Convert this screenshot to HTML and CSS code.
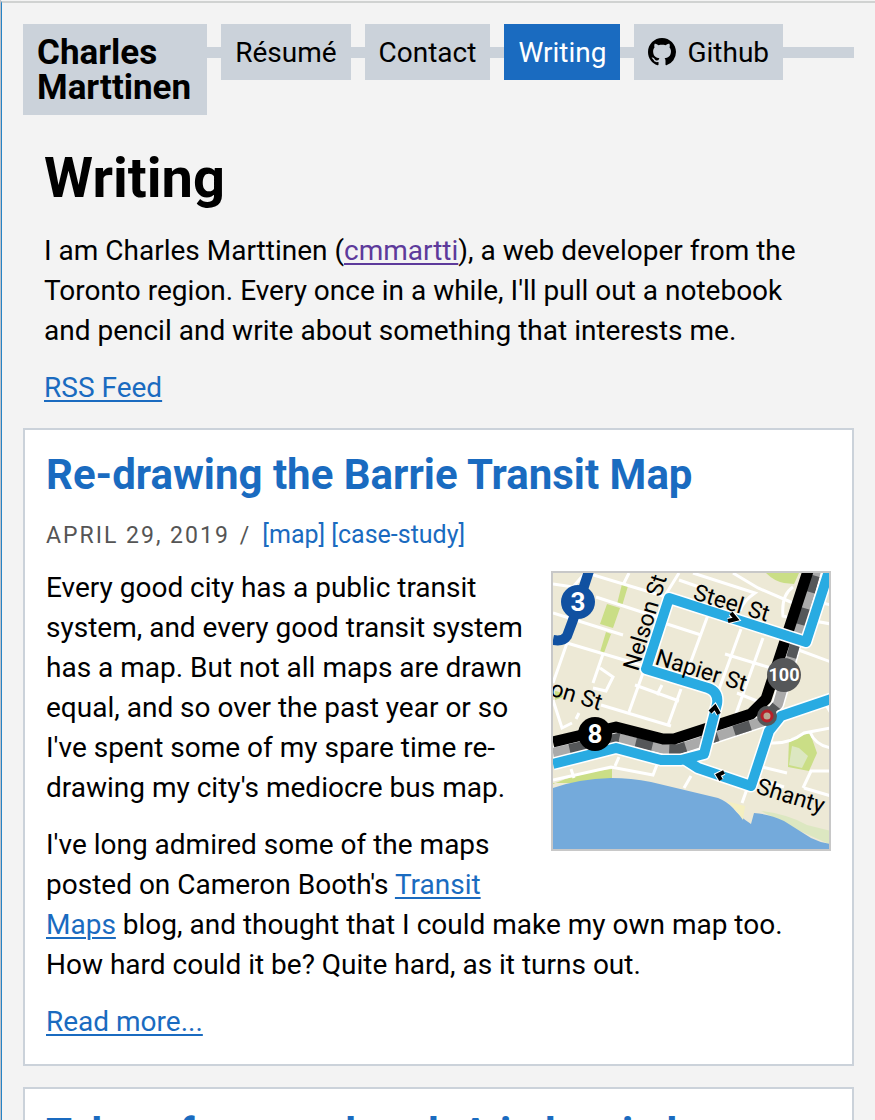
FILE: index.html
```html
<!DOCTYPE html>
<html lang="en">
<head>
<meta charset="utf-8">
<meta name="viewport" content="width=device-width, initial-scale=1">
<title>Writing – Charles Marttinen</title>
<link rel="stylesheet" href="styles.css">
</head>
<body>
<header class="site-header">
  <a class="brand" href="#">Charles<br>Marttinen</a>
  <nav class="site-nav" aria-label="Main">
    <a class="nav-link" href="#">Résumé</a>
    <a class="nav-link" href="#">Contact</a>
    <a class="nav-link current" href="#" aria-current="page">Writing</a>
    <a class="nav-link" href="#"><svg class="nav-icon" viewBox="0 0 16 16" aria-hidden="true"><path d="M8 0C3.58 0 0 3.58 0 8c0 3.54 2.29 6.53 5.47 7.59.4.07.55-.17.55-.38 0-.19-.01-.82-.01-1.49-2.01.37-2.53-.49-2.69-.94-.09-.23-.48-.94-.82-1.13-.28-.15-.68-.52-.01-.53.63-.01 1.08.58 1.23.82.72 1.21 1.87.87 2.33.66.07-.52.28-.87.51-1.07-1.78-.2-3.64-.89-3.64-3.95 0-.87.31-1.59.82-2.15-.08-.2-.36-1.02.08-2.12 0 0 .67-.21 2.2.82.64-.18 1.32-.27 2-.27s1.36.09 2 .27c1.53-1.04 2.2-.82 2.2-.82.44 1.1.16 1.92.08 2.12.51.56.82 1.27.82 2.15 0 3.07-1.87 3.75-3.65 3.95.29.25.54.73.54 1.48 0 1.07-.01 1.93-.01 2.2 0 .21.15.46.55.38A8.01 8.01 0 0 0 16 8c0-4.42-3.58-8-8-8z"/></svg>Github</a>
  </nav>
</header>
<main>
  <section class="intro">
    <h1>Writing</h1>
    <p>I am Charles Marttinen (<a class="visited" href="#">cmmartti</a>), a web developer from the Toronto region. Every once in a while, I'll pull out a notebook and pencil and write about something that interests me.</p>
    <p><a href="#">RSS Feed</a></p>
  </section>
  <article class="post">
    <h2><a href="#">Re-drawing the Barrie Transit Map</a></h2>
    <div class="meta"><time datetime="2019-04-29">April 29, 2019</time><span class="slash">/</span><a href="#">[map]</a> <a href="#">[case-study]</a></div>
    <svg class="map" viewBox="0 0 276 276" role="img" aria-label="Transit map detail">
      <rect width="278" height="278" fill="#ede9d6"/>
      <!-- parks -->
      <g fill="#cade86">
        <path d="M54 31l13 4-7 20-13-4zM69 11l6 2-6 20-5-2zM53 59l5 2-7 19-4-1z"/>
        <path d="M213 0q8 8 18 10l10 1 5-11zM0 211q28-12 59-15v14H0z"/>
        <path d="M2 118q6 0 8 6l-8 3z"/>
        <path d="M236 166l21-6 7 20-8 18-21-4z"/>
      </g>
      <path d="M239 173l7 2 9 8-6 12-13-3z" fill="#dce7c1"/>
      <path d="M208 238q26 3 46 14l24 6v14l-40-18z" fill="#dce7c1"/>
      <!-- streets -->
      <g fill="none" stroke="#fff" stroke-width="3">
        <path d="M0 11l20 3 12-14M34 0l76 23M43 24l67 22M0 40l70 22M14 70l74 22M76 0l-5 10M126 0l-13 21M114 51l34 11M50 81l-10 29M47 95l13 9-7 14-13-3M14 70L0 110M0 127l9 28 10-5M82 112l44 16M109 112l-5 10M128 116l-13 36M90 100l-14 39"/>
        <path d="M126 7l20 7M140 0l62 20q-12 8-15 18M180 0l25 15 35 15M240 14q-12 8-10 29l12 3M252 26l26 6M250 46l28 5M243 76l35 13M155 42l-25 68M188 56l-27 74M210 65l-30 84M172 81l46 14M184 120l20 8"/>
        <path d="M48 132l70 21M26 140l-3 6M0 207l58-13 42 8 5-13M66 184l-4 9M18 196l3 9M138 203l-7 12M218 170q18 1 33-10l26-5M257 159q5 13 21 16M278 140l-5-8M209 194l25 6M250 215l8-17h20M251 215l27 8M199 202l-10 28M203 205l28 9"/>
      </g>
      <!-- lake and beach -->
      <path d="M0 215q25-9 58-10 20 0 40 4l67 16q8 3 15 10 7 9 18 16l3-11q16 1 30 8l27 17q10 5 20 6v7H0z" fill="#74aadb"/>
      <path d="M173 228l19 5-2 14q-8-12-17-19z" fill="#f4efc1"/>
      <!-- routes -->
      <g fill="none" stroke-linejoin="round">
        <path d="M0 180l65-15 46 11q8 1 15 0l85-28 14-17L263-2" stroke="#fff" stroke-width="13"/>
        <path d="M0 180l65-15 46 11q8 1 15 0l85-28 14-17L263-2" stroke="#aaa" stroke-width="10"/>
        <path d="M0 180l65-15 46 11q8 1 15 0l85-28 14-17L263-2" stroke="#555759" stroke-width="10" stroke-dasharray="17" stroke-dashoffset="17"/>
        <path d="M0 169l63-15 47 12h11l77-25 15-15L255-2" stroke="#000" stroke-width="11"/>
        <path d="M278 126l-50 17-12 15-18 55-53-18-14-9" stroke="#fff" stroke-width="13"/>
        <path d="M0 191l63-16 45 12h20l23-6 13-50q2-12-9-16l-62-19 23-71 137 44L276-2" stroke="#fff" stroke-width="13"/>
        <path d="M278 126l-50 17-12 15-18 55-53-18-14-9" stroke="#29abe2" stroke-width="10"/>
        <path d="M0 191l63-16 45 12h20l23-6 13-50q2-12-9-16l-62-19 23-71 137 44L276-2" stroke="#29abe2" stroke-width="10"/>
        <path d="M36-2L20 47l-6 16q-4 6-14 4" stroke="#1151a1" stroke-width="10"/>
        <g stroke-linejoin="miter">
          <path d="M178 40l5 6-8 2M157 139l5-5 4 7M171 199l-6 3 3 5" stroke="#fff" stroke-width="6"/>
          <path d="M178 40l5 6-8 2M157 139l5-5 4 7M171 199l-6 3 3 5" stroke="#000" stroke-width="4"/>
        </g>
      </g>
      <circle cx="25" cy="29" r="17" fill="#1151a1"/>
      <circle cx="42" cy="161" r="17" fill="#000"/>
      <circle cx="231" cy="102" r="17" fill="#555759"/>
      <circle cx="214" cy="143" r="10" fill="#555759"/>
      <circle cx="214" cy="143" r="5" fill="#b9a893" stroke="#b51f29" stroke-width="3"/>
      <g class="badge-text">
        <text x="25" y="38">3</text><text x="42" y="170">8</text><text class="small" x="231" y="108">100</text>
      </g>
      <g class="street">
        <text transform="translate(85 99) rotate(-73)">Nelson St</text>
        <text transform="translate(139 26) rotate(17)">Steel St</text>
        <text transform="translate(101 91) rotate(17)">Napier St</text>
        <text transform="translate(-4 122) rotate(17)">on St</text>
        <text transform="translate(202 220) rotate(17)">Shanty</text>
      </g>
    </svg>
    <p>Every good city has a public transit system, and every good transit system has a map. But not all maps are drawn equal, and so over the past year or so I've spent some of my spare time re-drawing my city's mediocre bus map.</p>
    <p>I've long admired some of the maps posted on Cameron Booth's <a href="#">Transit Maps</a> blog, and thought that I could make my own map too. How hard could it be? Quite hard, as it turns out.</p>
    <p><a href="#">Read more...</a></p>
  </article>
  <article class="post">
    <h2><a href="#">Take a few new hand. A in barrie l</a></h2>
  </article>
</main>
</body>
</html>
```
FILE: styles.css
```css
* { box-sizing: border-box; }
html {
  height: 100%;
  overflow: hidden;
  padding-top: 1px;
  border-left: 1px solid #bfc1c8;
  background: #f3f3f3;
}
body {
  margin: 0;
  min-height: 100%;
  padding: 21px 21px 0;
  border-top: 2px solid #d0d2d1;
  border-left: 1px solid #2583c5;
  font: 28px/40px Roboto, sans-serif;
  color: #000;
}
a { color: #1a6bc0; text-decoration-thickness: 2px; text-underline-offset: 3px; }
a.visited { color: #5d3a9b; }
.site-header {
  display: flex;
  align-items: flex-start;
  background: linear-gradient(#cbd2da, #cbd2da) 0 23px / 100% 11px no-repeat;
}
.brand {
  padding: 11px 16px 10px 14px;
  background: #cbd2da;
  color: #000;
  font-size: 35px;
  font-weight: 700;
  line-height: 35px;
  text-decoration: none;
}
.site-nav { display: flex; }
.nav-link {
  display: flex;
  align-items: center;
  margin-left: 14px;
  padding: 9px 14px 7px;
  background: #cbd2da;
  color: #000;
  text-decoration: none;
}
.nav-link.current { background: #1a6bc0; color: #fff; }
.nav-icon { width: 28px; height: 28px; margin: 0 11px 2px 0; }
.intro { padding: 0 21px; }
p { margin: 0 0 17px; }
h1 { margin: 28px 0 18px; font-size: 56px; line-height: 70px; font-weight: 700; }
.intro p:last-child { margin-bottom: 20px; }
.post {
  margin-bottom: 21px;
  padding: 21px;
  border: 2px solid #cbd2da;
  background: #fff;
}
.post p:last-child { margin-bottom: 1px; }
h2 { margin: 0 0 18px; font-size: 42px; line-height: 48px; font-weight: 700; }
h2 a, .meta a { text-decoration: none; }
.meta { margin-bottom: 14px; font-size: 25px; line-height: 36px; }
.meta time, .slash { color: #555; font-size: 23px; text-transform: uppercase; letter-spacing: 2px; }
.slash { margin: 0 11px 0 10px; }
.map {
  float: right;
  width: 280px;
  height: 280px;
  margin: 3px 0 21px 28px;
  border: 2px solid #c8c8c8;
}
.badge-text { font: 700 26px Roboto, sans-serif; fill: #fff; text-anchor: middle; }
.badge-text .small { font-size: 18px; }
.street { font: 23px Roboto, sans-serif; fill: #000; }
```
